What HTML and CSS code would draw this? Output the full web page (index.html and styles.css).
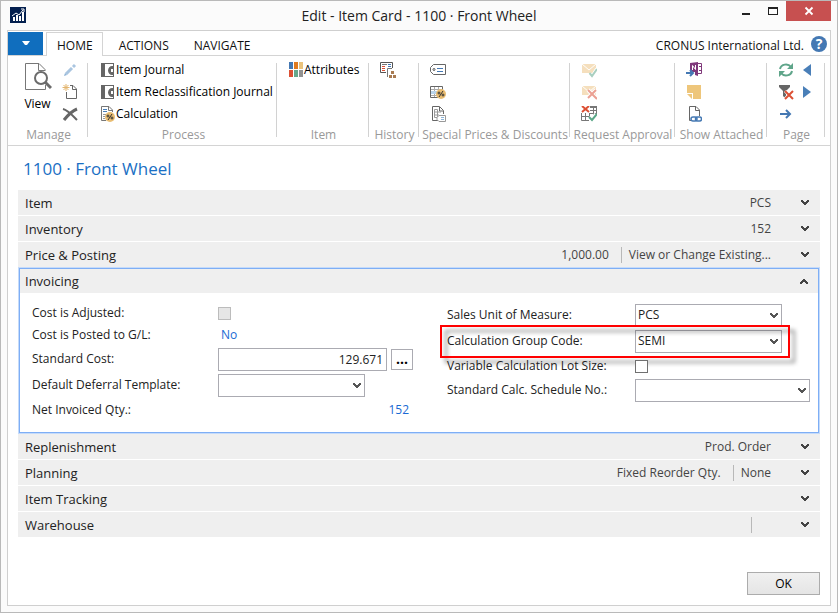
FILE: index.html
```html
<!DOCTYPE html>
<html lang="en">
<head>
<meta charset="utf-8">
<title>Edit - Item Card - 1100 · Front Wheel</title>
<link rel="stylesheet" href="styles.css">
</head>
<body>
<svg class="defs" aria-hidden="true">
  <symbol id="chev" viewBox="0 0 8 6"><path d="M0 0h2v1h1v1h2V1h1V0h2v2H7v1H6v1H5v1H3V4H2V3H1V2H0z"/></symbol>
  <symbol id="journal" viewBox="0 0 16 16"><path fill="#666" d="M1 1h13v4h-1V2H5v12h8v-2h1v3H1z"/><path fill="#666" d="M14 4v9h-2c-2 0-4-2-4-4.500S10 4 12 4zm-3 3v3h2V7z"/></symbol>
  <symbol id="percent" viewBox="0 0 10 10"><circle cx="5" cy="5" r="5" fill="#e9bd72"/><path d="M3 8l4-6" stroke="#333" fill="none"/><circle cx="3" cy="4" r="1" fill="none" stroke="#333"/><circle cx="7" cy="6" r="1" fill="none" stroke="#333"/></symbol>
  <symbol id="mail" viewBox="0 0 16 16"><path fill="#f5dfbd" d="M1 2h14v9H1z"/><path d="M1 2l7 6 7-6" fill="none" stroke="#fff" stroke-width="1"/></symbol>
</svg>
<div class="window">
  <header class="titlebar">
    <svg class="app-icon" viewBox="0 0 16 16"><path fill="#04204f" d="M0 0h16v16H0z"/><path fill="#fff" d="M3 10h2v4H3zM6 8h2v6H6zM9 9h2v5H9zM12 5h2v9h-2z"/><path d="M2 9l4-3 3 2 4-5M11 2h3v3" fill="none" stroke="#fff"/></svg>
    <h1 class="caption">Edit - Item Card - 1100 · Front Wheel</h1>
    <div class="win-buttons">
      <button class="win-btn" aria-label="Minimize"><svg viewBox="0 0 10 10"><path fill="#222" d="M1 7h8v2H1z"/></svg></button>
      <button class="win-btn" aria-label="Maximize"><svg viewBox="0 0 10 10"><path fill="#222" fill-rule="evenodd" d="M0 1h10v8H0zM1 3v5h8V3z"/></svg></button>
      <button class="win-btn close" aria-label="Close"><svg viewBox="0 0 10 10"><path d="M1.500 1.500l7 7M8.500 1.500l-7 7" stroke="#fff" stroke-width="1.800"/></svg></button>
    </div>
  </header>
  <main class="pane">
    <nav class="tabs">
      <button class="file-menu" aria-label="Application menu"><svg viewBox="0 0 8 5"><path fill="#fff" d="M0 0h8L5 4H3z"/></svg></button>
      <a class="tab active" href="#home">HOME</a>
      <a class="tab" href="#actions">ACTIONS</a>
      <a class="tab" href="#navigate">NAVIGATE</a>
      <span class="company">CRONUS International Ltd.</span>
      <button class="help" aria-label="Help">?</button>
    </nav>
    <section class="ribbon">
      <div class="group manage">
        <div class="tools">
          <button class="view"><svg viewBox="0 0 28 29"><path d="M11 27.500H1.500v-26H15l6 6V9M14.500 2v6.500H21M8 27.500h13.500V23" fill="none" stroke="#777"/><circle cx="17" cy="16" r="6" fill="#fff" stroke="#6b6b6b" stroke-width="2"/><path d="M21 20l6 6" stroke="#6b6b6b" stroke-width="3"/></svg>View</button>
          <div class="stack">
            <button aria-label="Edit"><svg viewBox="0 0 16 16"><path d="M4 12l6-6" stroke="#a9c5e0" stroke-width="3"/><path d="M11 5l2-2" stroke="#a9c5e0" stroke-width="3"/><path fill="#8fb3d6" d="M2 14l1-3 2 2z"/></svg></button>
            <button aria-label="New"><svg viewBox="0 0 16 16"><path d="M8 1.500h3l3.500 3.500v9.500h-10V8M10.500 2v3.500H14" fill="none" stroke="#666"/><path d="M4 0v7M.500 3.500h7M1.500 1l5 5M6.500 1l-5 5" stroke="#e3b56e"/></svg></button>
            <button aria-label="Delete"><svg viewBox="0 0 16 16"><path d="M1 3c5 1 9 6 14 11" fill="none" stroke="#666" stroke-width="2"/><path d="M15 3C10 5 6 9 2 14" fill="none" stroke="#666" stroke-width="3"/></svg></button>
          </div>
        </div>
        <span class="group-name">Manage</span>
      </div>
      <i class="divider"></i>
      <div class="group process">
        <div class="stack">
          <button><svg viewBox="0 0 16 16"><use href="#journal"/></svg>Item Journal</button>
          <button><svg viewBox="0 0 16 16"><use href="#journal"/></svg>Item Reclassification Journal</button>
          <button><svg viewBox="0 0 16 16"><path d="M6 14.500H1.500V.500H9L12.500 4v2M8.500 1v3.500H12" fill="none" stroke="#777"/><path stroke="#4a7fb8" d="M3 3.500h4M3 5.500h4"/><path stroke="#999" d="M3 8.500h3M3 10.500h2M3 12.500h2"/><use href="#percent" x="5" y="6" width="10" height="10"/></svg>Calculation</button>
        </div>
        <span class="group-name">Process</span>
      </div>
      <i class="divider"></i>
      <div class="group item">
        <div class="stack">
          <button><svg viewBox="0 0 16 16"><path fill="#4478b3" d="M1 0h4v7H1z"/><path fill="#e07a1f" d="M6 0h4v7H6z"/><path fill="#eac37c" d="M11 0h4v7h-4z"/><path fill="#dc5034" d="M1 8h4v7H1z"/><path fill="#66a88c" d="M6 8h4v7H6z"/><path fill="#929292" d="M11 8h4v7h-4z"/></svg>Attributes</button>
        </div>
        <span class="group-name">Item</span>
      </div>
      <i class="divider"></i>
      <div class="group history">
        <div class="stack">
          <button aria-label="Entries"><svg viewBox="0 0 16 16"><path d="M6 10.500H.500v-10h12V6" fill="none" stroke="#555"/><path stroke="#777" d="M2 2.500h5"/><path stroke="#4478b3" d="M8 2.500h3M8 4.500h3"/><path stroke="#dc5034" d="M2 4.500h3M2 6.500h3M2 8.500h3"/><path d="M12 6.500H7.500V15" fill="none" stroke="#777"/><path fill="#a87b52" d="M11 9h3v3h-3zM9 13h3v3H9zM13 13h3v3h-3z"/></svg></button>
        </div>
        <span class="group-name">History</span>
      </div>
      <i class="divider"></i>
      <div class="group special">
        <div class="stack">
          <button aria-label="Prices"><svg viewBox="0 0 16 16"><path d="M3.500 2.500h12v10h-12l-3-3v-4z" fill="none" stroke="#666"/><circle cx="4" cy="7.500" r="1" fill="none" stroke="#555"/><path stroke="#4478b3" d="M7 6.500h6M7 9.500h6"/></svg></button>
          <button aria-label="Line Discounts"><svg viewBox="0 0 16 16"><path d="M.500 2.500h12v11H.500z" fill="none" stroke="#666"/><path d="M1 5.500h11M1 11.500h11M4.500 3v10M8.500 3v10" stroke="#aaa"/><path fill="#b8d3ea" d="M1 7h6v3H1z"/><use href="#percent" x="6" y="5" width="10" height="10"/></svg></button>
          <button aria-label="Price Worksheet"><svg viewBox="0 0 16 16"><path d="M8 14.500H2.500V.500h7l4 4V8M9.500 1v4H13" fill="none" stroke="#666"/><path d="M4.500 3.500h3v8h-3zM4 6h7M4 9h5M7.500 6v5" fill="none" stroke="#999"/><path d="M9 9.500h6.500v6H9l-2-2v-2z" fill="#fff" stroke="#999"/><path stroke="#8db6db" d="M11 11.500h3M11 13.500h3"/></svg></button>
        </div>
        <span class="group-name">Special Prices &amp; Discounts</span>
      </div>
      <i class="divider"></i>
      <div class="group request">
        <div class="stack">
          <button aria-label="Send Approval Request"><svg viewBox="0 0 16 16"><use href="#mail"/><path d="M8 12l3 3 5-8" fill="none" stroke="#fff" stroke-width="4"/><path d="M8.500 11l2.500 3 5-7" fill="none" stroke="#a9cfc0" stroke-width="2"/></svg></button>
          <button aria-label="Cancel Approval Request"><svg viewBox="0 0 16 16"><use href="#mail"/><path d="M7 6l8 8M15 6l-8 8" stroke="#fff" stroke-width="4"/><path d="M7 6l9 9M15 6l-8 8" stroke="#eba093" stroke-width="2"/></svg></button>
          <button aria-label="Approvals"><svg viewBox="0 0 16 16"><path d="M.500 7v7.500H8M9 .500h6.500V8M1 10.500h8M4.500 7v7M9 4.500h6M9 7.500h6M8.500 7v4M12.500 1v8" fill="none" stroke="#777"/><path fill="#777" d="M9 0h7v2H9z"/><path d="M1 0l7 6M8 0L1 6" stroke="#dc5034" stroke-width="2"/><path d="M8 11l3 3 4-6" stroke="#fff" stroke-width="4" fill="none"/><path d="M8 11l3 3 5-6" fill="none" stroke="#5aa788" stroke-width="2"/></svg></button>
        </div>
        <span class="group-name">Request Approval</span>
      </div>
      <i class="divider"></i>
      <div class="group show">
        <div class="stack">
          <button aria-label="OneNote"><svg viewBox="0 0 16 16"><path fill="#80397b" d="M4 1l8-1v14l-3-1v-3H4z"/><path d="M6.500 8V3.500l3 4V3" fill="none" stroke="#fff"/><path fill="none" stroke="#80397b" d="M12 1.500h3.500v10H12M13 4.500h2M13 8.500h2"/><path d="M0 11h6M4 8l3 3-3 3" fill="none" stroke="#4478b3" stroke-width="2"/></svg></button>
          <button aria-label="Notes"><svg viewBox="0 0 16 16"><path fill="#eec67b" d="M1 1h14v14H7V9H1z"/><path fill="#eec67b" d="M1 10h5v5z"/></svg></button>
          <button aria-label="Links"><svg viewBox="0 0 16 16"><path d="M5 14.500H3.500V.500H10L13.500 4v6M9.500 1v3.500H13" fill="none" stroke="#666"/><g fill="none" stroke="#4478b3" stroke-width="1.500"><rect x="5" y="11" width="6" height="4" rx="2"/><rect x="9.500" y="11" width="6" height="4" rx="2"/></g></svg></button>
        </div>
        <span class="group-name">Show Attached</span>
      </div>
      <i class="divider"></i>
      <div class="group page">
        <div class="tools">
          <div class="stack">
            <button aria-label="Refresh"><svg viewBox="0 0 16 16"><path d="M2 7c1-5 8-6 11-2M14 9c-1 5-8 6-11 2" fill="none" stroke="#5fa58a" stroke-width="2"/><path fill="#5fa58a" d="M15 1v6H9zM1 15V9h6z"/></svg></button>
            <button aria-label="Clear Filter"><svg viewBox="0 0 16 16"><path fill="#666" d="M1 1h11v2L8 7v8l-3-3V7L1 3z"/><path d="M7 7l7 7M14 7l-7 8" stroke="#fff" stroke-width="3"/><path d="M7 7l8 8M15 7l-8 8" stroke="#dc5034" stroke-width="2"/></svg></button>
            <button aria-label="Go to"><svg viewBox="0 0 16 16"><path d="M2 8h10M8 4l4 4-4 4" fill="none" stroke="#4478b3" stroke-width="2"/></svg></button>
          </div>
          <div class="stack">
            <button aria-label="Previous"><svg viewBox="0 0 16 16"><path fill="#4a7fb8" d="M9 2v12L1 8z"/></svg></button>
            <button aria-label="Next"><svg viewBox="0 0 16 16"><path fill="#4a7fb8" d="M1 2v12l8-6z"/></svg></button>
          </div>
        </div>
        <span class="group-name">Page</span>
      </div>
      <i class="divider"></i>
    </section>
    <section class="content">
      <h2 class="page-title">1100 · Front Wheel</h2>
      <div class="fasttabs">
        <button class="fasttab"><span class="name">Item</span><span class="value">PCS</span><svg class="chev"><use href="#chev"/></svg></button>
        <button class="fasttab"><span class="name">Inventory</span><span class="value">152</span><svg class="chev"><use href="#chev"/></svg></button>
        <button class="fasttab"><span class="name">Price &amp; Posting</span><span class="value">1,000.00</span><span class="value">View or Change Existing...</span><svg class="chev"><use href="#chev"/></svg></button>
        <div class="open-tab">
          <button class="fasttab" aria-expanded="true"><span class="name">Invoicing</span><svg class="chev up"><use href="#chev"/></svg></button>
          <form class="fields">
            <div class="column">
              <div class="row low"><label for="adj">Cost is Adjusted:</label><input type="checkbox" id="adj" disabled></div>
              <div class="row low"><span class="label">Cost is Posted to G/L:</span><a class="link" href="#posted">No</a></div>
              <div class="row"><label for="cost">Standard Cost:</label><input type="text" id="cost" value="129.671"><button type="button" class="more" aria-label="Look up cost">...</button></div>
              <div class="row"><label for="deferral">Default Deferral Template:</label><span class="select"><select id="deferral"><option></option></select><svg class="chev"><use href="#chev"/></svg></span></div>
              <div class="row short"><span class="label">Net Invoiced Qty.:</span><a class="link number" href="#qty">152</a></div>
            </div>
            <div class="column">
              <div class="row"><label for="uom">Sales Unit of Measure:</label><span class="select"><select id="uom"><option>PCS</option></select><svg class="chev"><use href="#chev"/></svg></span></div>
              <div class="row marked"><label for="group">Calculation Group Code:</label><span class="select"><select id="group"><option>SEMI</option></select><svg class="chev"><use href="#chev"/></svg></span></div>
              <div class="row short"><label for="lot">Variable Calculation Lot Size:</label><input type="checkbox" id="lot"></div>
              <div class="row short"><label for="sched">Standard Calc. Schedule No.:</label><span class="select wide"><select id="sched"><option></option></select><svg class="chev"><use href="#chev"/></svg></span></div>
            </div>
          </form>
        </div>
        <button class="fasttab"><span class="name">Replenishment</span><span class="value">Prod. Order</span><svg class="chev"><use href="#chev"/></svg></button>
        <button class="fasttab"><span class="name">Planning</span><span class="value">Fixed Reorder Qty.</span><span class="value">None</span><svg class="chev"><use href="#chev"/></svg></button>
        <button class="fasttab"><span class="name">Item Tracking</span><svg class="chev"><use href="#chev"/></svg></button>
        <button class="fasttab"><span class="name">Warehouse</span><span class="value"></span><span class="value empty"></span><svg class="chev"><use href="#chev"/></svg></button>
      </div>
      <footer class="actions"><button class="ok">OK</button></footer>
    </section>
  </main>
</div>
</body>
</html>
```
FILE: styles.css
```css
* { box-sizing: border-box; }
body { margin: 0; font: 12px/16px "Open Sans", "Noto Sans", sans-serif; color: #222; background: #fbfbfb; }
button, input, select { font: inherit; color: inherit; margin: 0; padding: 0; border: 0; background: none; border-radius: 0; }
a { color: inherit; text-decoration: none; }
svg { display: block; flex: none; }
.defs { position: absolute; width: 0; height: 0; }

.window { min-height: 100vh; display: flex; flex-direction: column; border: 1px solid #b9b9b9; padding: 0 6px 6px; }
.titlebar { display: grid; grid-template-columns: 1fr auto 1fr; height: 29px; flex: none; }
.app-icon { width: 16px; height: 16px; margin: 6px 0 0 3px; }
.caption { margin: 4px 0 0; font-size: 14px; line-height: 22px; font-weight: 400; }
.win-buttons { display: flex; justify-content: flex-end; align-items: flex-start; }
.win-btn { width: 27px; height: 20px; display: flex; align-items: center; justify-content: center; }
.win-btn svg { width: 10px; height: 10px; }
.win-btn.close { width: 45px; background: #c75050; }

.pane { flex: 1; display: flex; flex-direction: column; border: 1px solid #cfcfcf; background: #fff; }
.tabs { display: flex; align-items: stretch; height: 25px; padding-top: 1px; border-bottom: 1px solid #d4d4d4; color: #111; }
.file-menu { width: 35px; background: #106ebe; display: flex; align-items: center; justify-content: center; }
.file-menu svg { width: 8px; height: 5px; }
.tab { padding: 6px 0 0 16px; margin-right: 9px; }
.tab.active { margin: 0 0 -1px 3px; padding: 5px 9px 0 10px; border: 1px solid #d4d4d4; border-bottom: 0; background: #fff; }
.company { margin-left: auto; padding-top: 6px; }
.help { width: 16px; height: 16px; border-radius: 8px; background: #4478b3; color: #fff; font-size: 14px; font-weight: 700; line-height: 16px; margin: 4px 3px 0 7px; }

.ribbon { display: flex; border-bottom: 1px solid #d4d4d4; color: #000; }
.divider { width: 1px; margin: 7px 0 8px; background: #d2d2d2; flex: none; }
.group { display: flex; flex-direction: column; justify-content: space-between; height: 89px; padding: 6px 0 2px 11px; flex: none; }
.group-name { margin-left: -9px; text-align: center; color: #999; white-space: nowrap; }
.tools { display: flex; }
.stack { display: flex; flex-direction: column; gap: 6px; align-items: flex-start; }
.stack button { display: flex; height: 16px; white-space: nowrap; }
.stack svg { width: 16px; height: 16px; }
.view { display: flex; flex-direction: column; align-items: center; gap: 5px; width: 37px; margin-right: 6px; }
.view svg { width: 28px; height: 29px; }
.manage { width: 79px; }
.process { width: 188px; padding-left: 12px; }
.item { width: 91px; }
.history { width: 49px; }
.special { width: 150px; }
.request { width: 104px; }
.show { width: 91px; }
.page { width: 57px; }
.page .tools { gap: 8px; }

.content { flex: 1; display: flex; flex-direction: column; padding: 10px; }
.page-title { margin: 0 0 8px 5px; font-size: 17px; line-height: 26px; font-weight: 400; color: #1a6fc4; }
.fasttabs { display: grid; gap: 1px; }
.fasttab { display: flex; align-items: center; width: 100%; height: 25px; padding: 0 11px 0 7px; background: #efefef; text-align: left; }
.name { margin-right: auto; font-size: 13px; }
.value { color: #444; }
.value + .value { margin-left: 12px; padding-left: 7px; border-left: 1px solid #b8b8b8; }
.value.empty { width: 20px; height: 16px; }
.chev { width: 8px; height: 6px; fill: #444; }
.fasttab .chev { margin-left: 30px; }
.chev.up { transform: rotate(180deg); }

.open-tab { border: 1px solid #7eaef5; box-shadow: 0 0 0 1px #c5dbfa; margin: 0 1px; background: #fff; }
.open-tab .fasttab { height: 24px; padding: 0 10px 0 5px; }
.fields { display: grid; grid-template-columns: 381fr 363fr; gap: 34px; padding: 9px 8px 10px 12px; }
.row { display: flex; align-items: center; height: 26px; position: relative; }
.row.low { height: 22px; }
.row.short { height: 24px; }
.row label, .label { width: 186px; flex: none; white-space: nowrap; }
.column + .column label { width: 188px; }
input[type="text"] { flex: 1; min-width: 0; height: 23px; padding: 0 3px; border: 1px solid #ababb2; text-align: right; background: #fff; }
input[type="checkbox"] { appearance: none; width: 13px; height: 13px; border: 1px solid #707070; background: #fff; }
input[type="checkbox"]:disabled { border-color: #bcbcbc; background: #e6e6e6; }
.more { width: 22px; height: 21px; margin-left: 4px; border: 1px solid #ababb2; background: #fff; color: #000; font-weight: 700; font-size: 14px; line-height: 16px; }
.select { position: relative; width: 147px; height: 23px; }
.select.wide { width: auto; flex: 1; }
.select select { appearance: none; width: 100%; height: 100%; padding: 0 20px 0 2px; border: 1px solid #ababb2; background: #fff; }
.select .chev { position: absolute; right: 4px; top: 9px; pointer-events: none; fill: #555; }
.link { color: #1a6ad4; padding-left: 3px; }
.link.number { margin-left: auto; padding-right: 4px; }
.marked::after { content: ""; position: absolute; left: -7px; right: 20px; top: -3px; bottom: -4px; border: 2px solid #f00; filter: drop-shadow(5px 5px 2px rgba(0, 0, 0, .45)); pointer-events: none; }

.actions { display: flex; justify-content: flex-end; margin-top: auto; }
.ok { width: 73px; height: 23px; border: 1px solid #acacac; background: linear-gradient(#f0f0f0, #e5e5e5); color: #000; }
```
